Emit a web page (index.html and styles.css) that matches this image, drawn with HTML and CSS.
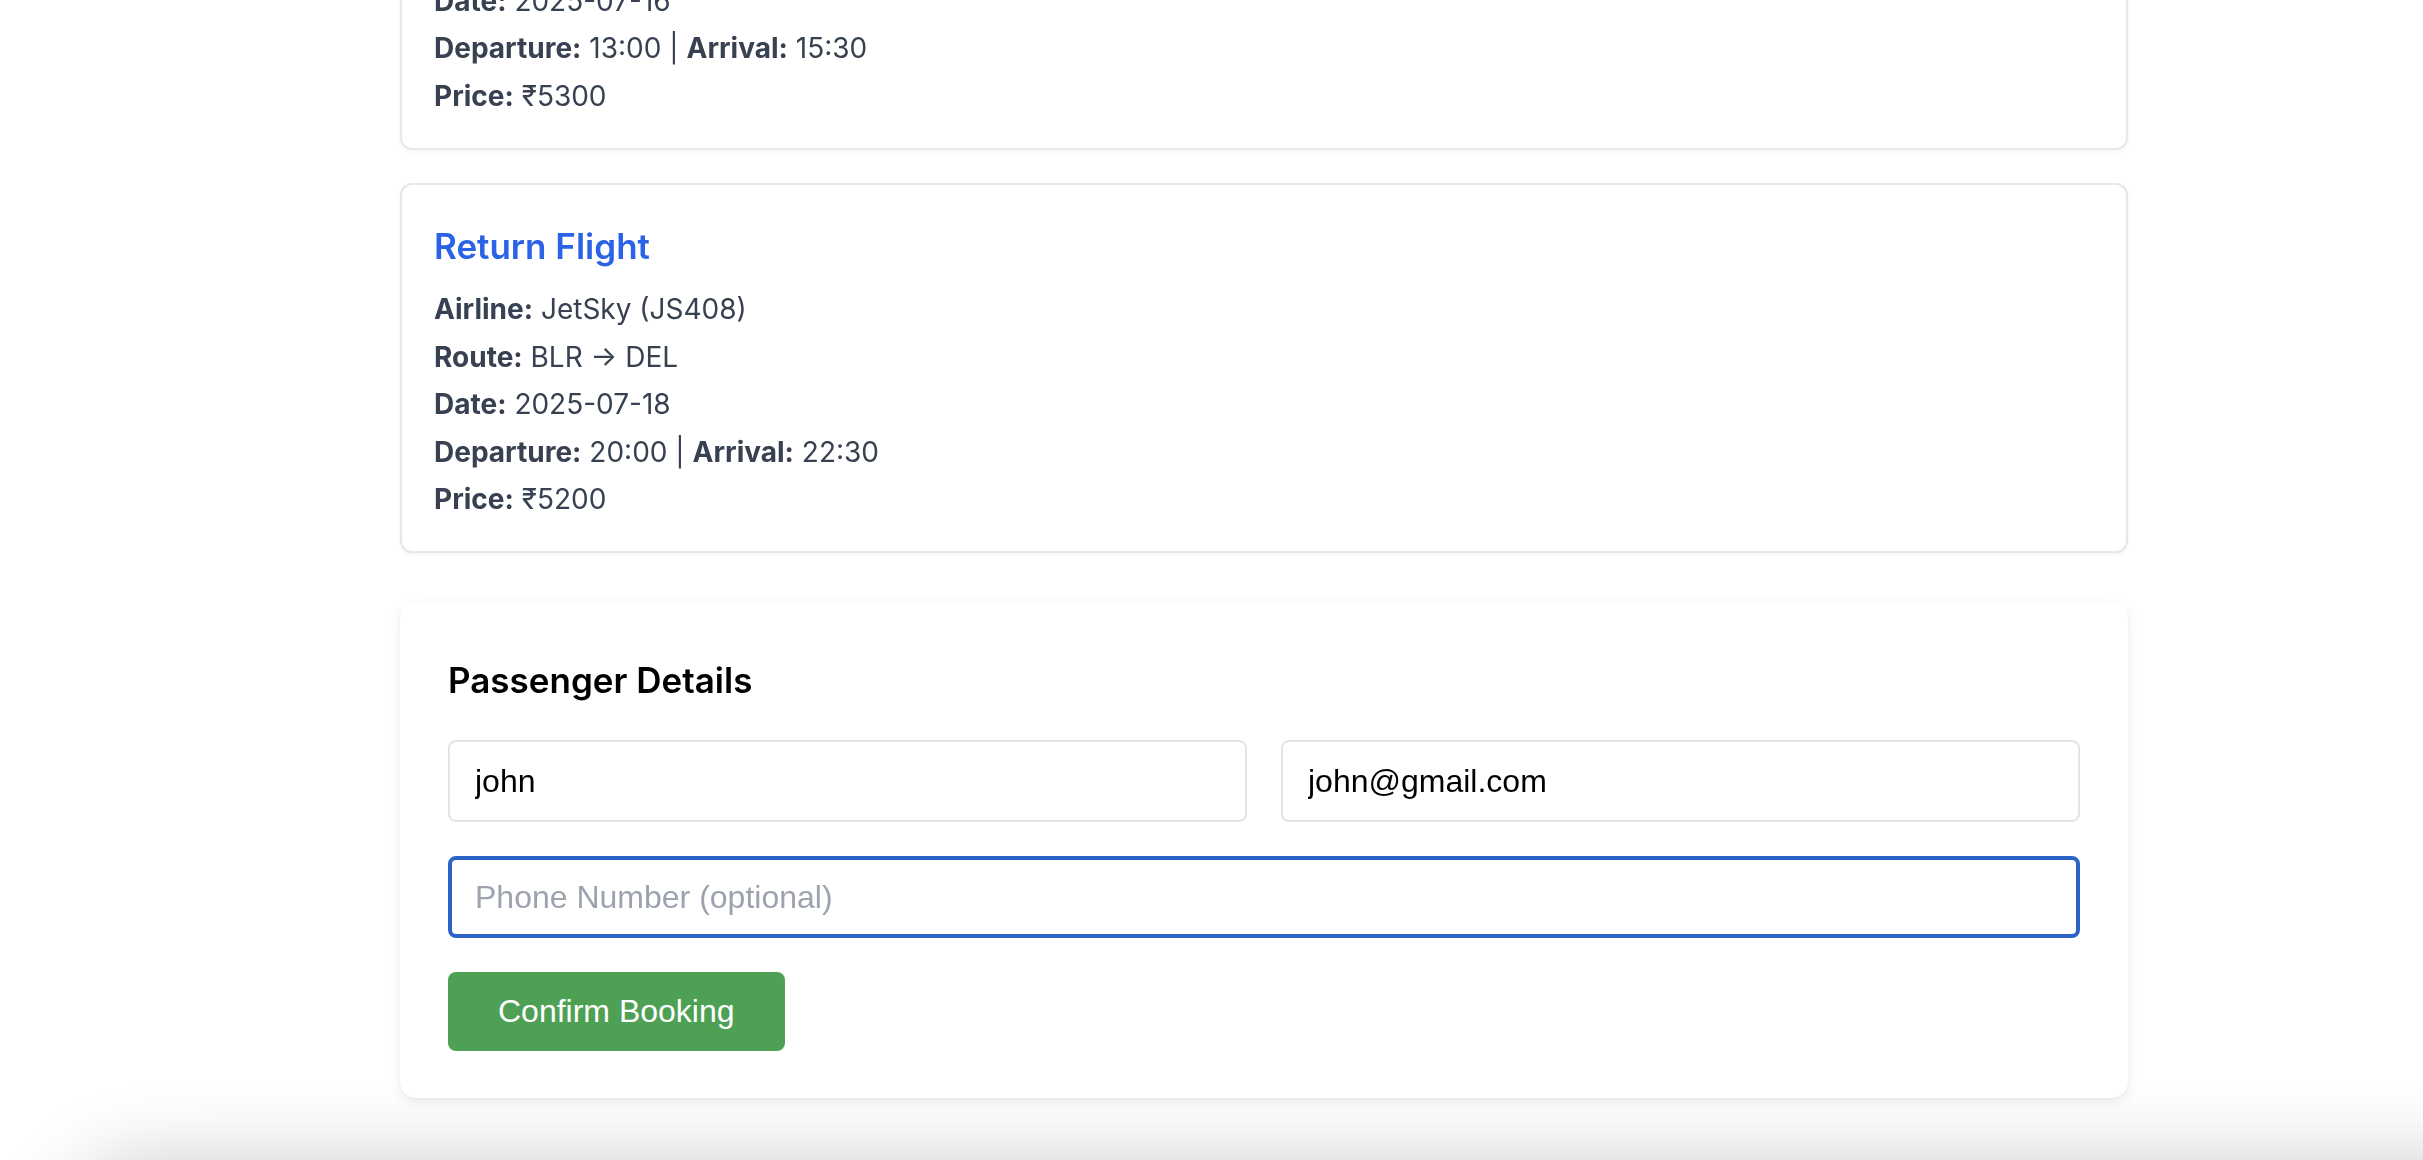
FILE: index.html
```html
<!DOCTYPE html>
<html lang="en">
<head>
<meta charset="utf-8">
<title>Review Booking</title>
<link rel="stylesheet" href="styles.css">
</head>
<body>
<div class="bottom-shade"></div>
<main class="page">
  <header class="page-head">
    <h1 class="page-title">Review Your Booking</h1>
    <p class="page-sub">Please check your flight details before confirming.</p>
  </header>

  <section class="flight-card">
    <h3 class="flight-title">Onward Flight</h3>
    <p class="flight-line"><b>Airline:</b> AirIndigo (AI212)</p>
    <p class="flight-line"><b>Route:</b> DEL → BLR</p>
    <p class="flight-line"><b>Date:</b> 2025-07-16</p>
    <p class="flight-line"><b>Departure:</b> 13:00 | <b>Arrival:</b> 15:30</p>
    <p class="flight-line"><b>Price:</b> ₹5300</p>
  </section>

  <section class="flight-card">
    <h3 class="flight-title">Return Flight</h3>
    <p class="flight-line"><b>Airline:</b> JetSky (JS408)</p>
    <p class="flight-line"><b>Route:</b> BLR → DEL</p>
    <p class="flight-line"><b>Date:</b> 2025-07-18</p>
    <p class="flight-line"><b>Departure:</b> 20:00 | <b>Arrival:</b> 22:30</p>
    <p class="flight-line"><b>Price:</b> ₹5200</p>
  </section>

  <form class="passenger-card" onsubmit="return false;">
    <h2 class="passenger-title">Passenger Details</h2>
    <input class="field" type="text" value="john" placeholder="Full Name">
    <input class="field" type="email" value="john@gmail.com" placeholder="Email">
    <input class="field field--focus" type="tel" placeholder="Phone Number (optional)">
    <button class="confirm-btn" type="submit">Confirm Booking</button>
  </form>
</main>
<script src="script.js"></script>
</body>
</html>
```

FILE: styles.css
```css
* {
  box-sizing: border-box;
}

html {
  background: #ffffff;
  scrollbar-width: none;
}

html::-webkit-scrollbar {
  display: none;
}

body {
  margin: 0;
  font-family: Inter, "Noto Sans", "Liberation Sans", sans-serif;
  color: #374151;
}

.bottom-shade {
  position: fixed;
  left: 60px;
  right: -200px;
  top: 100%;
  height: 240px;
  border-radius: 90px;
  box-shadow: 0 0 80px rgba(0, 0, 0, 0.2);
  z-index: -1;
}

.page {
  width: 1728px;
  margin-left: 400px;
  padding: 60px 0 62px;
  display: flex;
  flex-direction: column;
}

.page-head {
  margin-bottom: 40px;
}

.page-title {
  margin: 0 0 12px;
  font-size: 48px;
  line-height: 60px;
  font-weight: 700;
  color: #111827;
}

.page-sub {
  margin: 0;
  font-size: 28px;
  line-height: 40px;
}

.flight-card {
  background: #ffffff;
  border: 2px solid #e5e7eb;
  border-radius: 12px;
  padding: 32px;
  display: flex;
  flex-direction: column;
  gap: 7.5px;
  box-shadow: 0 2px 4px rgba(0, 0, 0, 0.04);
}

.flight-card + .flight-card {
  margin-top: 33px;
}

.flight-title {
  margin: 3px 0 10px;
  font-size: 35px;
  line-height: 52px;
  font-weight: 600;
  color: #2a63e6;
}

.flight-line {
  margin: 0;
  font-size: 28px;
  line-height: 40px;
}

.flight-line b {
  font-weight: 700;
}

.passenger-card {
  margin-top: 50px;
  background: #ffffff;
  border-radius: 16px;
  padding: 51px 48px 47px;
  box-shadow: 0 4px 14px rgba(0, 0, 0, 0.08), 0 1px 3px rgba(0, 0, 0, 0.05);
  display: grid;
  grid-template-columns: 1fr 1fr;
  gap: 34px;
}

.passenger-title {
  grid-column: 1 / -1;
  margin: 0;
  font-size: 35px;
  line-height: 52px;
  font-weight: 600;
  color: #000000;
}

.field {
  width: 100%;
  height: 82px;
  border: 2px solid #e3e4e8;
  border-radius: 8px;
  padding: 0 25px;
  font-family: "Liberation Sans", Arial, sans-serif;
  font-size: 32px;
  color: #000000;
  background: #ffffff;
  outline: none;
}

.field::placeholder {
  color: #9ca3af;
}

.field--focus {
  grid-column: 1 / -1;
  border: 4px solid #2a64c6;
  padding: 0 23px;
}

.confirm-btn {
  justify-self: start;
  height: 79px;
  padding: 0 50px;
  border: none;
  border-radius: 8px;
  background: #4ea154;
  color: #ffffff;
  font-family: "Liberation Sans", Arial, sans-serif;
  font-size: 32px;
  cursor: pointer;
}
```

FILE: script.js
```js
function scrollToBottom() {
  window.scrollTo(0, document.documentElement.scrollHeight);
}
scrollToBottom();
window.addEventListener('load', scrollToBottom);
```
